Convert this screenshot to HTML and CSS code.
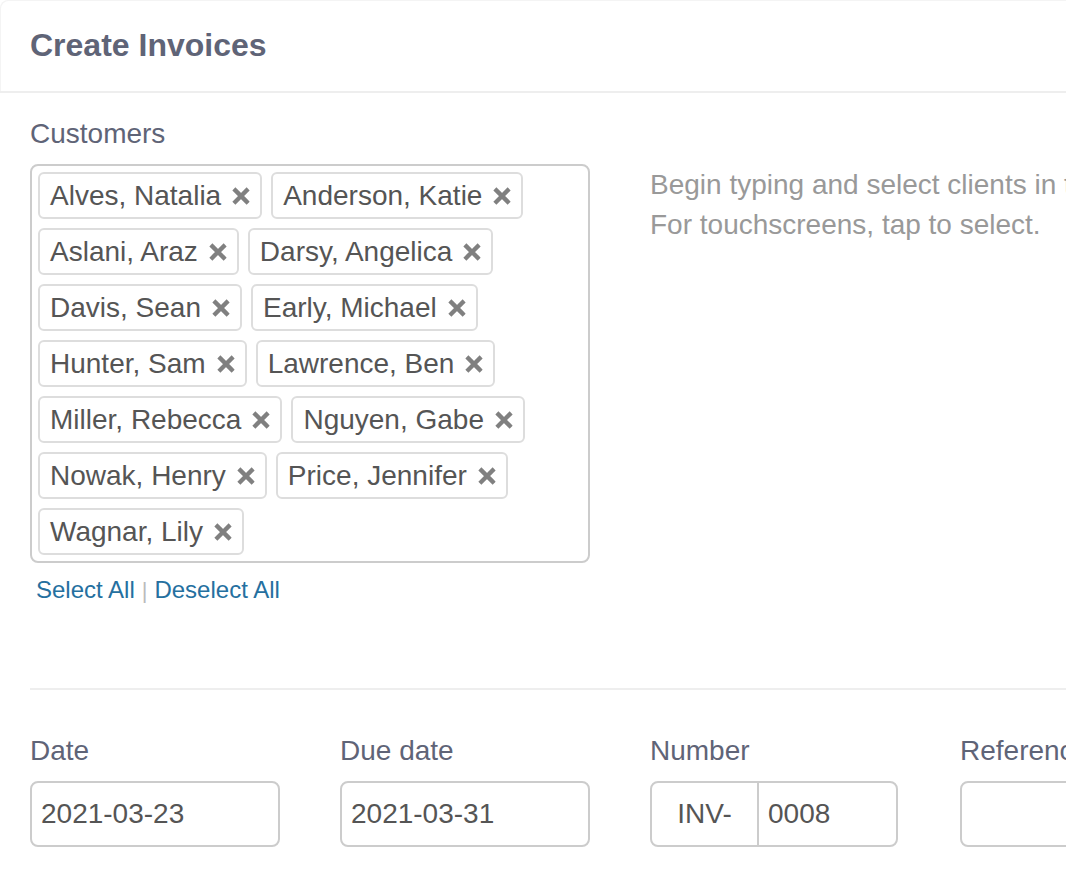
FILE: index.html
```html
<!DOCTYPE html>
<html lang="en">
<head>
<meta charset="utf-8">
<title>Create Invoices</title>
<link rel="stylesheet" href="styles.css">
</head>
<body>
<div class="panel">
  <div class="panel-header">
    <h1 class="title">Create Invoices</h1>
  </div>
  <div class="panel-body">
    <div class="grid">
      <div class="field span-2">
        <label class="label">Customers</label>
        <div class="tagbox">
          <span class="tag">Alves, Natalia<svg class="x" viewBox="0 0 16 16"><path d="M3 3L13 13M13 3L3 13"/></svg></span>
          <span class="tag">Anderson, Katie<svg class="x" viewBox="0 0 16 16"><path d="M3 3L13 13M13 3L3 13"/></svg></span>
          <span class="tag">Aslani, Araz<svg class="x" viewBox="0 0 16 16"><path d="M3 3L13 13M13 3L3 13"/></svg></span>
          <span class="tag">Darsy, Angelica<svg class="x" viewBox="0 0 16 16"><path d="M3 3L13 13M13 3L3 13"/></svg></span>
          <span class="tag">Davis, Sean<svg class="x" viewBox="0 0 16 16"><path d="M3 3L13 13M13 3L3 13"/></svg></span>
          <span class="tag">Early, Michael<svg class="x" viewBox="0 0 16 16"><path d="M3 3L13 13M13 3L3 13"/></svg></span>
          <span class="tag">Hunter, Sam<svg class="x" viewBox="0 0 16 16"><path d="M3 3L13 13M13 3L3 13"/></svg></span>
          <span class="tag">Lawrence, Ben<svg class="x" viewBox="0 0 16 16"><path d="M3 3L13 13M13 3L3 13"/></svg></span>
          <span class="tag">Miller, Rebecca<svg class="x" viewBox="0 0 16 16"><path d="M3 3L13 13M13 3L3 13"/></svg></span>
          <span class="tag">Nguyen, Gabe<svg class="x" viewBox="0 0 16 16"><path d="M3 3L13 13M13 3L3 13"/></svg></span>
          <span class="tag">Nowak, Henry<svg class="x" viewBox="0 0 16 16"><path d="M3 3L13 13M13 3L3 13"/></svg></span>
          <span class="tag">Price, Jennifer<svg class="x" viewBox="0 0 16 16"><path d="M3 3L13 13M13 3L3 13"/></svg></span>
          <span class="tag">Wagnar, Lily<svg class="x" viewBox="0 0 16 16"><path d="M3 3L13 13M13 3L3 13"/></svg></span>
        </div>
        <div class="links">
          <a class="link" href="#">Select All</a><span class="sep">|</span><a class="link" href="#">Deselect All</a>
        </div>
      </div>
      <div class="help span-2">
        <p class="help-line">Begin typing and select clients in the box.</p>
        <p class="help-line">For touchscreens, tap to select.</p>
      </div>
    </div>

    <div class="divider"></div>

    <div class="grid">
      <div class="field">
        <label class="label">Date</label>
        <div class="input">2021-03-23</div>
      </div>
      <div class="field">
        <label class="label">Due date</label>
        <div class="input">2021-03-31</div>
      </div>
      <div class="field">
        <label class="label">Number</label>
        <div class="input-group">
          <span class="addon">INV-</span>
          <span class="group-input">0008</span>
        </div>
      </div>
      <div class="field">
        <label class="label">Reference</label>
        <div class="input"></div>
      </div>
    </div>
  </div>
</div>
</body>
</html>
```

FILE: styles.css
```css
html, body {
  margin: 0;
  padding: 0;
  background: #ffffff;
  overflow: hidden;
}

body {
  font-family: "Liberation Sans", Arial, Helvetica, sans-serif;
  color: #555555;
  width: 1066px;
  height: 885px;
}

.panel {
  width: 1300px;
}

.panel-header {
  padding: 27px 30px 28px;
  border-bottom: 2px solid #eeeeee;
  border-top-left-radius: 8px;
  box-shadow: inset 1px 1px 0 #f4f4f4;
}

.title {
  margin: 0;
  font-size: 32px;
  line-height: 36px;
  font-weight: bold;
  color: #5f6477;
}

.panel-body {
  padding: 21px 30px 0;
}

.grid {
  display: grid;
  grid-template-columns: repeat(4, 250px);
  column-gap: 60px;
  align-items: start;
}

.span-2 {
  grid-column: span 2;
}

.field {
  display: flex;
  flex-direction: column;
}

.label {
  font-size: 28px;
  line-height: 40px;
  color: #5f6477;
  margin-bottom: 10px;
}

.tagbox {
  display: flex;
  flex-wrap: wrap;
  align-content: flex-start;
  gap: 9px 9px;
  padding: 6px;
  border: 2px solid #cccccc;
  border-radius: 8px;
}

.tag {
  display: flex;
  align-items: center;
  height: 47px;
  box-sizing: border-box;
  padding: 0 10px 0 10px;
  border: 2px solid #dddddd;
  border-radius: 6px;
  font-size: 28px;
  color: #555555;
  white-space: nowrap;
}

.x {
  width: 18px;
  height: 18px;
  margin-left: 11px;
  fill: none;
  stroke: #808080;
  stroke-width: 3.8;
  stroke-linecap: square;
}

.links {
  margin-top: 10px;
  padding-left: 6px;
  font-size: 24px;
  line-height: 34px;
}

.link {
  color: #25709f;
  text-decoration: none;
}

.sep {
  color: #bbbbbb;
  margin: 0 7px;
  font-size: 22px;
}

.help {
  margin-top: 51px;
}

.help-line {
  margin: 0;
  font-size: 28px;
  line-height: 40px;
  color: #999999;
  white-space: nowrap;
}

.divider {
  height: 2px;
  background: #eeeeee;
  margin-top: 80px;
  margin-bottom: 41px;
}

.input {
  height: 66px;
  box-sizing: border-box;
  border: 2px solid #cccccc;
  border-radius: 8px;
  padding: 0 9px;
  display: flex;
  align-items: center;
  font-size: 28px;
  color: #555555;
}

.input-group {
  display: flex;
  height: 66px;
  box-sizing: border-box;
  width: 248px;
  border: 2px solid #cccccc;
  border-radius: 8px;
  font-size: 28px;
  color: #555555;
}

.addon {
  width: 105px;
  display: flex;
  align-items: center;
  justify-content: center;
  border-right: 2px solid #cccccc;
}

.group-input {
  flex: 1;
  display: flex;
  align-items: center;
  padding: 0 9px;
}
```
